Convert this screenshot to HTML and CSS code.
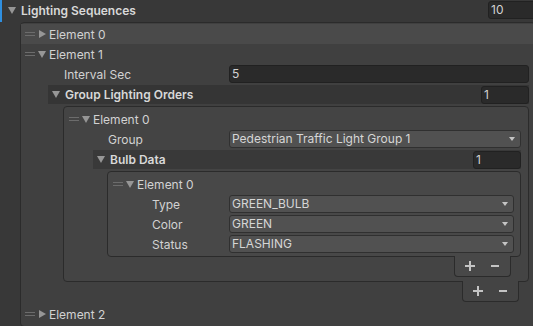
FILE: index.html
```html
<!DOCTYPE html>
<html lang="en">
<head>
  <meta charset="UTF-8" />
  <meta name="viewport" content="width=device-width, initial-scale=1.0" />
  <title>Traffic Light Sequencer - Inspector</title>
  <link rel="stylesheet" href="styles.css">
</head>
<body>
  <div class="inspector">
    <!-- array header: Lighting Sequences -->
    <div class="row top-row">
      <span class="override-bar"></span>
      <span class="fold open"></span>
      <span class="label bold">Lighting Sequences</span>
      <span class="int-field size-field">10</span>
    </div>

    <div class="list list-outer">
      <div class="row item hover">
        <span class="handle"></span><span class="fold"></span><span class="label">Element 0</span>
      </div>
      <div class="row item">
        <span class="handle"></span><span class="fold open"></span><span class="label">Element 1</span>
      </div>

      <div class="elem-body body-1">
        <div class="row prop">
          <span class="label">Interval Sec</span>
          <span class="int-field">5</span>
        </div>
        <div class="row sub-head">
          <span class="fold open"></span>
          <span class="label bold">Group Lighting Orders</span>
          <span class="int-field size-field">1</span>
        </div>

        <div class="list list-groups">
          <div class="row item">
            <span class="handle"></span><span class="fold open"></span><span class="label">Element 0</span>
          </div>
          <div class="elem-body body-2">
            <div class="row prop">
              <span class="label">Group</span>
              <span class="dropdown">Pedestrian Traffic Light Group 1</span>
            </div>
            <div class="row sub-head">
              <span class="fold open"></span>
              <span class="label bold">Bulb Data</span>
              <span class="int-field size-field">1</span>
            </div>

            <div class="list list-bulbs">
              <div class="row item">
                <span class="handle"></span><span class="fold open"></span><span class="label">Element 0</span>
              </div>
              <div class="elem-body body-3">
                <div class="row prop">
                  <span class="label">Type</span>
                  <span class="dropdown">GREEN_BULB</span>
                </div>
                <div class="row prop">
                  <span class="label">Color</span>
                  <span class="dropdown">GREEN</span>
                </div>
                <div class="row prop">
                  <span class="label">Status</span>
                  <span class="dropdown">FLASHING</span>
                </div>
              </div>
            </div>
            <div class="list-footer footer-bulbs">
              <svg width="10" height="10" viewBox="0 0 10 10"><path d="M4 0h2v10H4zM0 4h10v2H0z" fill="#c4c4c4"/></svg>
              <svg width="10" height="10" viewBox="0 0 10 10"><path d="M1 4h8v2H1z" fill="#c4c4c4"/></svg>
            </div>
          </div>
        </div>
        <div class="list-footer footer-groups">
          <svg width="10" height="10" viewBox="0 0 10 10"><path d="M4 0h2v10H4zM0 4h10v2H0z" fill="#c4c4c4"/></svg>
          <svg width="10" height="10" viewBox="0 0 10 10"><path d="M1 4h8v2H1z" fill="#c4c4c4"/></svg>
        </div>
      </div>

      <div class="row item">
        <span class="handle"></span><span class="fold"></span><span class="label">Element 2</span>
      </div>
    </div>
  </div>
</body>
</html>
```

FILE: styles.css
```css
/* Base */
* { box-sizing: border-box; margin: 0; padding: 0; }
html, body { overflow: hidden; }
body {
  width: 533px;
  height: 326px;
  background: #383838;
  color: #d2d2d2;
  font-family: Inter, "Noto Sans", sans-serif;
  font-size: 12px;
}
.inspector { width: 536px; }

/* Generic rows */
.row {
  display: flex;
  align-items: center;
  height: 20px;
  white-space: nowrap;
}
.label { flex: 0 0 auto; }
.bold { font-weight: 600; color: #d8d8d8; }

/* Foldout triangle */
.fold {
  flex: 0 0 8px;
  width: 8px;
  height: 8px;
  display: flex;
  align-items: center;
  justify-content: center;
}
.fold::before {
  content: "";
  border-left: 7px solid #969696;
  border-top: 4px solid transparent;
  border-bottom: 4px solid transparent;
}
.fold.open::before {
  border-top: 7px solid #969696;
  border-left: 4px solid transparent;
  border-right: 4px solid transparent;
  border-bottom: 0;
}

/* Drag handle (two short lines) */
.handle {
  flex: 0 0 10px;
  height: 4px;
  border-top: 1px solid #6c6c6c;
  border-bottom: 1px solid #6c6c6c;
  margin-right: 3px;
}
.item .fold { margin-right: 3px; }
.item { padding-left: 5px; }
.list-outer > .item { padding-left: 4px; }
.item.hover { background: #4a4a4a; }

/* Top array header */
.top-row { height: 20px; }
.override-bar {
  flex: 0 0 2px;
  align-self: flex-start;
  height: 22px;
  background: #2f8fe0;
  margin-right: 6px;
}
.top-row .fold { margin-right: 5px; }

/* Fields */
.int-field {
  flex: 1 1 auto;
  height: 18px;
  line-height: 16px;
  padding: 0 2px;
  background: #2a2a2a;
  border: 1px solid #212121;
  border-radius: 3px;
  color: #d2d2d2;
}
.size-field {
  flex: 0 0 48px;
  margin-left: auto;
}
.dropdown {
  flex: 1 1 auto;
  position: relative;
  height: 18px;
  line-height: 16px;
  padding: 0 2px;
  background: #515151;
  border: 1px solid #303030;
  border-radius: 3px;
  color: #d6d6d6;
}
.dropdown::after {
  content: "";
  position: absolute;
  right: 5px;
  top: 6px;
  border-top: 4px solid #c4c4c4;
  border-left: 3.5px solid transparent;
  border-right: 3.5px solid transparent;
}

/* Sub headers (nested arrays) */
.sub-head {
  height: 19px;
  margin-top: 1px;
  padding-left: 4px;
  background: rgba(0, 0, 0, 0.16);
}
.sub-head .fold { margin-right: 5px; }
.body-1 > .sub-head { margin-left: 27px; }
.body-2 > .sub-head { margin-left: 29px; }

/* List boxes */
.list {
  border: 1px solid #2b2b2b;
  border-radius: 4px;
  padding-top: 2px;
  padding-bottom: 2px;
}
.list-outer {
  margin: 2px 0 0 20px;
  padding-top: 1px;
  background: #404040;
}
.list-groups {
  margin: 2px 0 0 42px;
  background: #444444;
}
.list-bulbs {
  margin: 2px 0 0 43px;
  background: #484848;
}

/* Element bodies */
.body-1 { margin-right: 6px; padding-bottom: 2px; }
.body-2 { margin-right: 7px; padding-bottom: 2px; }
.body-3 { margin-right: 6px; }

.prop { padding-left: 44px; }
.body-1 > .prop { padding-left: 43px; }
.body-1 > .prop > .label { flex-basis: 165px; }
.body-2 > .prop > .label { flex-basis: 121px; }
.body-3 > .prop > .label { flex-basis: 77px; }

/* +/- footers */
.list-footer {
  display: flex;
  align-items: center;
  justify-content: center;
  gap: 15px;
  width: 57px;
  height: 21px;
  margin: -1px 10px 0 auto;
  border: 1px solid #2b2b2b;
  border-top: 0;
  border-radius: 0 0 4px 4px;
}
.footer-bulbs { background: #484848; }
.footer-groups { background: #444444; }
```
